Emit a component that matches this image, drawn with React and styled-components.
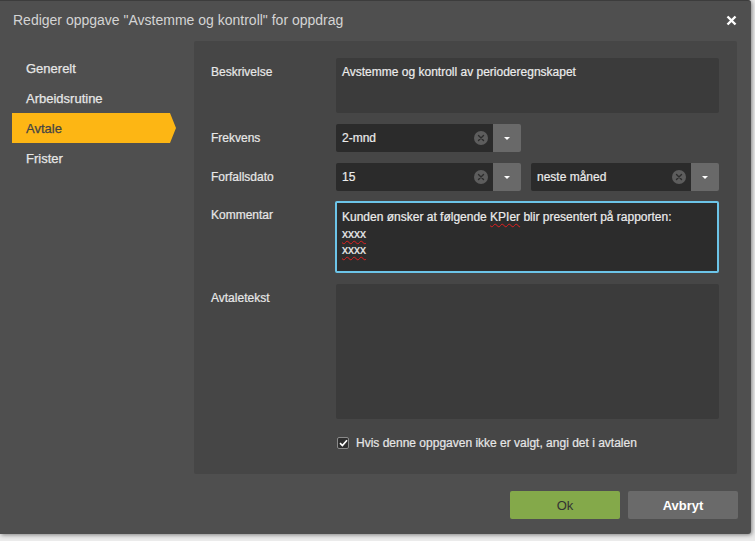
import React from "react";
import styled, { createGlobalStyle } from "styled-components";

const Global = createGlobalStyle`
  html, body { margin: 0; padding: 0; }
  body {
    background: #ebebeb;
    font-family: "Liberation Sans", Arial, sans-serif;
    width: 755px;
    height: 541px;
    overflow: hidden;
  }
`;

const Dialog = styled.div`
  width: 751px;
  height: 534px;
  box-sizing: border-box;
  background: #4f4f4f;
  border-top: 1px solid #3c3c3c;
  border-radius: 0 3px 3px 0;
  box-shadow: 1px 1px 4px rgba(0, 0, 0, 0.45);
  display: flex;
  flex-direction: column;
`;

const TitleBar = styled.div`
  height: 40px;
  display: flex;
  align-items: center;
  justify-content: space-between;
  padding: 0 14px 2px 13px;
  box-sizing: border-box;
`;

const Title = styled.div`
  font-size: 14px;
  color: #d4d4d4;
`;

const Close = styled.div`
  width: 12px;
  height: 12px;
  display: flex;
  align-items: center;
  justify-content: center;
`;

const Body = styled.div`
  display: flex;
  padding: 0 14px 0 12px;
  gap: 18px;
`;

const Nav = styled.nav`
  width: 164px;
  padding-top: 12px;
  display: flex;
  flex-direction: column;
`;

const NavItem = styled.div`
  position: relative;
  height: 30px;
  display: flex;
  align-items: center;
  padding-left: 14px;
  font-size: 13px;
  -webkit-text-stroke: 0.25px currentColor;
  color: ${(p) => (p.$active ? "#444444" : "#e6e6e6")};
  background: ${(p) => (p.$active ? "#fdb614" : "transparent")};
  width: ${(p) => (p.$active ? "144px" : "auto")};
  &::after {
    content: "";
    display: ${(p) => (p.$active ? "block" : "none")};
    position: absolute;
    right: -6px;
    top: 0;
    border-top: 15px solid transparent;
    border-bottom: 15px solid transparent;
    border-left: 6px solid #fdb614;
  }
`;

const Panel = styled.div`
  width: 543px;
  height: 433px;
  box-sizing: border-box;
  background: #464646;
  border-radius: 2px;
  padding: 17px 18px 0 17px;
  display: flex;
  flex-direction: column;
`;

const Row = styled.div`
  display: flex;
  margin-bottom: ${(p) => p.$mb ?? 11}px;
`;

const Label = styled.div`
  width: 125px;
  flex-shrink: 0;
  font-size: 12px;
  color: #e8e8e8;
  -webkit-text-stroke: 0.2px currentColor;
  padding-top: ${(p) => p.$pt ?? 7}px;
`;

const Box = styled.div`
  width: 383px;
  height: ${(p) => p.$h}px;
  box-sizing: border-box;
  background: #3b3b3b;
  border-radius: 2px;
  padding: 7px 6px;
  font-size: 12px;
  color: #ececec;
  -webkit-text-stroke: 0.2px currentColor;
`;

const Comment = styled.div`
  width: 385px;
  height: 72px;
  margin-left: -1px;
  box-sizing: border-box;
  background: #2c2c2c;
  border: 2px solid #6cc4e8;
  border-radius: 2px;
  padding: 6px 5px;
  font-size: 12px;
  line-height: 16.5px;
  color: #ececec;
  -webkit-text-stroke: 0.2px currentColor;
`;

const Spell = styled.span`
  text-decoration: underline wavy #e02020;
  text-decoration-thickness: 1px;
  text-underline-offset: 2px;
`;

const Selects = styled.div`
  display: flex;
  gap: 10px;
`;

const Select = styled.div`
  width: ${(p) => p.$w}px;
  height: 28px;
  display: flex;
  border-radius: 2px;
  overflow: hidden;
`;

const SelectValue = styled.div`
  flex: 1;
  background: #2b2b2b;
  display: flex;
  align-items: center;
  justify-content: space-between;
  padding: 0 5px 0 6px;
  font-size: 12px;
  color: #ececec;
  -webkit-text-stroke: 0.2px currentColor;
`;

const ClearBtn = styled.div`
  width: 14px;
  height: 14px;
  border-radius: 50%;
  background: #5d5d5d;
  display: flex;
  align-items: center;
  justify-content: center;
`;

const DropBtn = styled.div`
  width: 28px;
  background: #696969;
  display: flex;
  align-items: center;
  justify-content: center;
  &::before {
    content: "";
    border-left: 3.5px solid transparent;
    border-right: 3.5px solid transparent;
    border-top: 3.5px solid #ffffff;
    margin-top: 1px;
  }
`;

const CheckRow = styled.label`
  display: flex;
  align-items: center;
  gap: 7px;
  margin: 17px 0 0 126px;
  font-size: 12px;
  color: #e6e6e6;
  -webkit-text-stroke: 0.2px currentColor;
`;

const CheckBox = styled.span`
  width: 12px;
  height: 12px;
  box-sizing: border-box;
  border: 1px solid #8a8a8a;
  border-radius: 2px;
  background: #2e2e2e;
  display: flex;
  align-items: center;
  justify-content: center;
`;

const Footer = styled.div`
  display: flex;
  justify-content: flex-end;
  gap: 8px;
  padding: 17px 13px 0 0;
`;

const Button = styled.button`
  width: 110px;
  height: 28px;
  border: none;
  border-radius: 2px;
  font-family: "Liberation Sans", Arial, sans-serif;
  font-size: 13px;
  font-weight: ${(p) => (p.$primary ? "normal" : "bold")};
  color: ${(p) => (p.$primary ? "#333333" : "#ffffff")};
  background: ${(p) => (p.$primary ? "#84a94a" : "#6a6a6a")};
  padding: 0;
`;

const ClearIcon = () => (
  <ClearBtn>
    <svg width="8" height="8" viewBox="0 0 8 8">
      <path d="M1.5 1.5 L6.5 6.5 M6.5 1.5 L1.5 6.5" stroke="#2c2c2c" strokeWidth="1.4" strokeLinecap="round" />
    </svg>
  </ClearBtn>
);

const SelectField = ({ w, value }) => (
  <Select $w={w}>
    <SelectValue>
      <span>{value}</span>
      <ClearIcon />
    </SelectValue>
    <DropBtn />
  </Select>
);

export default function App() {
  const nav = ["Generelt", "Arbeidsrutine", "Avtale", "Frister"];
  return (
    <>
      <Global />
      <Dialog>
        <TitleBar>
          <Title>Rediger oppgave "Avstemme og kontroll" for oppdrag</Title>
          <Close>
            <svg width="11" height="11" viewBox="0 0 11 11">
              <path d="M1.5 1.5 L9.5 9.5 M9.5 1.5 L1.5 9.5" stroke="#ffffff" strokeWidth="2.4" />
            </svg>
          </Close>
        </TitleBar>
        <Body>
          <Nav>
            {nav.map((n) => (
              <NavItem key={n} $active={n === "Avtale"}>
                {n}
              </NavItem>
            ))}
          </Nav>
          <Panel>
            <Row>
              <Label>Beskrivelse</Label>
              <Box $h={55}>Avstemme og kontroll av perioderegnskapet</Box>
            </Row>
            <Row>
              <Label>Frekvens</Label>
              <SelectField w={185} value="2-mnd" />
            </Row>
            <Row $mb={10}>
              <Label>Forfallsdato</Label>
              <Selects>
                <SelectField w={185} value="15" />
                <SelectField w={188} value="neste måned" />
              </Selects>
            </Row>
            <Row>
              <Label>Kommentar</Label>
              <Comment>
                Kunden ønsker at følgende <Spell>KPIer</Spell> blir presentert på rapporten:
                <br />
                <Spell>xxxx</Spell>
                <br />
                <Spell>xxxx</Spell>
              </Comment>
            </Row>
            <Row $mb={0}>
              <Label $pt={7}>Avtaletekst</Label>
              <Box $h={135} />
            </Row>
            <CheckRow>
              <CheckBox>
                <svg width="9" height="8" viewBox="0 0 9 8">
                  <path d="M1 4.2 L3.4 6.5 L8 1.3" fill="none" stroke="#ffffff" strokeWidth="1.7" />
                </svg>
              </CheckBox>
              Hvis denne oppgaven ikke er valgt, angi det i avtalen
            </CheckRow>
          </Panel>
        </Body>
        <Footer>
          <Button $primary>Ok</Button>
          <Button>Avbryt</Button>
        </Footer>
      </Dialog>
    </>
  );
}
